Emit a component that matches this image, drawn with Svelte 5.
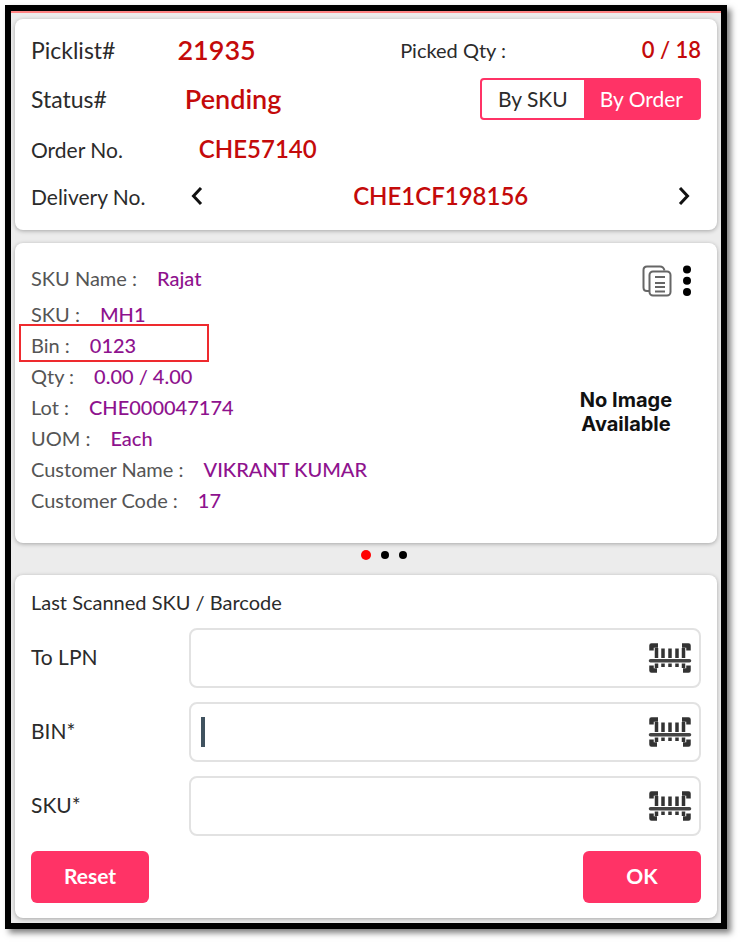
<script lang="ts">
	type Mode = 'sku' | 'order'

	type Detail = {
		label: string
		value: string
		marked?: boolean
	}

	const details: Detail[] = [
		{ label: 'SKU Name', value: 'Rajat' },
		{ label: 'SKU', value: 'MH1' },
		{ label: 'Bin', value: '0123', marked: true },
		{ label: 'Qty', value: '0.00 / 4.00' },
		{ label: 'Lot', value: 'CHE000047174' },
		{ label: 'UOM', value: 'Each' },
		{ label: 'Customer Name', value: 'VIKRANT KUMAR' },
		{ label: 'Customer Code', value: '17' },
	]

	const fields = $state([
		{ id: 'lpn', label: 'To LPN', value: '' },
		{ id: 'bin', label: 'BIN*', value: '' },
		{ id: 'sku', label: 'SKU*', value: '' },
	])

	let mode: Mode = $state('order')
	let active = $state('bin')
	let page = $state(0)

	const reset = () => {
		for (const field of fields) field.value = ''
		active = 'bin'
	}
</script>

<main class="screen">
	<section class="card summary">
		<div class="row">
			<span class="label big">Picklist#</span>
			<strong class="value large near">21935</strong>
			<span class="label picked">Picked Qty :</span>
			<strong class="value count">0 / 18</strong>
		</div>
		<div class="row status">
			<span class="label big">Status#</span>
			<strong class="value large">Pending</strong>
			<div class="toggle">
				<button class:on={mode === 'sku'} onclick={() => (mode = 'sku')}>By SKU</button>
				<button class:on={mode === 'order'} onclick={() => (mode = 'order')}>By Order</button>
			</div>
		</div>
		<div class="row">
			<span class="label">Order No.</span>
			<strong class="value">CHE57140</strong>
		</div>
		<div class="row delivery">
			<span class="label">Delivery No.</span>
			<div class="pager">
				<button class="icon" aria-label="Previous delivery">
					<svg width="12" height="18" viewBox="0 0 12 18"><path d="M10 1 L2.5 9 L10 17" /></svg>
				</button>
				<strong class="value">CHE1CF198156</strong>
				<button class="icon" aria-label="Next delivery">
					<svg width="12" height="18" viewBox="0 0 12 18"><path d="M2 1 L9.5 9 L2 17" /></svg>
				</button>
			</div>
		</div>
	</section>

	<section class="card item">
		<dl>
			{#each details as detail}
				<div class="detail" class:marked={detail.marked}>
					<dt>{detail.label} :</dt>
					<dd>{detail.value}</dd>
				</div>
			{/each}
		</dl>
		<div class="side">
			<div class="actions">
				<button class="icon" aria-label="Copy">
					<svg class="copy" width="30" height="32" viewBox="0 0 30 32">
						<path d="M7 26 H5 Q1.5 26 1.5 22.5 V5 Q1.5 1.5 5 1.5 H18 Q21.5 1.5 22.5 5.5" />
						<rect x="7.5" y="6.5" width="21" height="24" rx="3.5" />
						<path d="M13 12 H23 M13 18 H23 M13 22 H23 M13 26.5 H23" />
					</svg>
				</button>
				<button class="icon" aria-label="More">
					<svg class="more" width="8" height="32" viewBox="0 0 8 32">
						<circle cx="4" cy="4.5" r="4" />
						<circle cx="4" cy="15.8" r="4" />
						<circle cx="4" cy="27" r="4" />
					</svg>
				</button>
			</div>
			<p class="no-image">No Image<br />Available</p>
		</div>
	</section>

	<nav class="dots" aria-label="Items">
		{#each [0, 1, 2] as i}
			<button class:current={page === i} aria-label="Item {i + 1}" onclick={() => (page = i)}></button>
		{/each}
	</nav>

	<section class="card scan">
		<h2>Last Scanned SKU / Barcode</h2>
		{#each fields as field}
			<div class="field">
				<label for={field.id}>{field.label}</label>
				<div class="box">
					<input id={field.id} bind:value={field.value} onfocus={() => (active = field.id)} />
					{#if active === field.id && !field.value}
						<span class="caret"></span>
					{/if}
					<button class="icon" aria-label="Scan {field.label}">
						<svg class="barcode" width="44" height="32" viewBox="0 0 44 32">
							<path class="corner" d="M3.5 8.5 V3.5 H10 M34 3.5 H40.5 V8.5 M3.5 23.5 V28.5 H9 M35 28.5 H40.5 V23.5" />
							<path class="bars" d="M8.5 6 V16 M15 6.5 V16 M22 6.5 V16 M29 6.5 V16 M35.5 6 V16" />
							<path class="bars" d="M8.5 21.5 V26 M15 21.5 V25 M22 21.5 V25 M29 21.5 V25 M35.5 21.5 V26" />
							<path class="beam" d="M2.5 18.8 H41.5" />
						</svg>
					</button>
				</div>
			</div>
		{/each}
		<div class="buttons">
			<button onclick={reset}>Reset</button>
			<button>OK</button>
		</div>
	</section>
</main>

<style>
	:global(body) {
		background: #fff;
	}

	.screen {
		margin: 5px 13px 13px 5px;
		padding: 8px 4px 5px;
		border: 6px solid #000;
		background: linear-gradient(#ff8484 2px, #ececec 2px);
		box-shadow: 4px 4px 6px rgba(0, 0, 0, 0.5);
		font-family: Lato, sans-serif;
		font-size: 20px;
		color: #2b2b2b;
	}

	button {
		margin: 0;
		padding: 0;
		border: none;
		background: none;
		font: inherit;
		color: inherit;
		cursor: pointer;
	}

	.card {
		padding: 0 16px;
		border-radius: 8px;
		background: #fff;
		box-shadow: 0 1px 4px rgba(0, 0, 0, 0.3);
	}

	.summary {
		padding-top: 7px;
		padding-bottom: 12px;
	}

	.row {
		display: flex;
		align-items: center;
		height: 50px;
	}

	.row:first-child {
		height: 48px;
	}

	.row.delivery {
		height: 44px;
	}

	.label {
		font-size: 21px;
	}

	.label.big {
		font-size: 23px;
	}

	.label.picked {
		margin-left: auto;
		font-size: 20px;
	}

	.value {
		margin-left: 76px;
		padding-bottom: 2px;
		font-size: 24px;
		font-weight: 600;
		color: #c40a0a;
	}

	.value.large {
		margin-left: 78px;
		font-size: 27px;
	}

	.value.near {
		margin-left: 62px;
	}

	.value.count {
		width: 195px;
		margin-left: 0;
		font-size: 22px;
		text-align: right;
	}

	.toggle {
		display: flex;
		height: 42px;
		margin-left: auto;
		box-sizing: border-box;
		border: 2px solid #ff3366;
		border-radius: 4px;
		font-size: 21px;
	}

	.toggle button {
		padding: 0 16px 2px;
	}

	.toggle .on {
		background: #ff3366;
		color: #fff;
	}

	.pager {
		display: flex;
		flex: 1;
		align-items: center;
		justify-content: space-between;
		padding: 0 11px 0 46px;
	}

	.pager .value {
		margin: 0;
	}

	.icon {
		display: flex;
	}

	svg {
		fill: none;
		stroke: #111;
		stroke-width: 3;
	}

	.item {
		display: flex;
		justify-content: space-between;
		margin-top: 13px;
		padding-top: 20px;
		padding-bottom: 27px;
	}

	dl {
		margin: 0;
	}

	.detail {
		display: flex;
		position: relative;
		gap: 20px;
		line-height: 31px;
	}

	.detail:first-child {
		margin-bottom: 5px;
	}

	/* highlight frame, drawn over the neighbouring rows */
	.marked::after {
		content: '';
		position: absolute;
		top: -6px;
		left: -12px;
		width: 190px;
		height: 38px;
		box-sizing: border-box;
		border: 2px solid #ee2a2e;
	}

	dt {
		color: #555;
	}

	dd {
		margin: 0;
		font-weight: 500;
		color: #8e128e;
	}

	.side {
		width: 150px;
	}

	.actions {
		display: flex;
		justify-content: flex-end;
		gap: 11px;
		padding: 2px 10px 0 0;
	}

	.copy {
		stroke: #666;
		stroke-width: 2;
	}

	.more {
		fill: #000;
		stroke: none;
	}

	.no-image {
		margin: 91px 0 0;
		font-family: Inter, sans-serif;
		font-size: 20px;
		font-weight: 700;
		line-height: 24px;
		color: #111;
		text-align: center;
	}

	.dots {
		display: flex;
		align-items: center;
		justify-content: center;
		gap: 10px;
		height: 24px;
		padding: 0 0 8px 35px;
	}

	.dots button {
		width: 8px;
		height: 8px;
		border-radius: 50%;
		background: #000;
	}

	.dots .current {
		width: 10px;
		height: 10px;
		background: #f00;
	}

	.scan {
		padding-top: 13px;
		padding-bottom: 15px;
	}

	h2 {
		margin: 0 0 12px;
		font-size: 20px;
		font-weight: 400;
		line-height: 28px;
	}

	.field {
		display: flex;
		align-items: center;
		margin-bottom: 14px;
	}

	.field label {
		width: 158px;
		padding-bottom: 4px;
		font-size: 21px;
	}

	.box {
		display: flex;
		position: relative;
		flex: 1;
		align-items: center;
		height: 60px;
		padding: 0 7px 0 10px;
		box-sizing: border-box;
		border: 2px solid #e2e2e2;
		border-radius: 8px;
	}

	input {
		flex: 1;
		min-width: 0;
		height: 40px;
		padding: 0;
		border: none;
		outline: none;
		background: none;
		font: inherit;
		color: inherit;
		caret-color: transparent;
	}

	.caret {
		position: absolute;
		left: 10px;
		width: 4px;
		height: 30px;
		background: #40525f;
	}

	.barcode {
		stroke: #333;
		stroke-linejoin: round;
	}

	.corner {
		stroke-width: 4.5;
	}

	.bars {
		stroke-width: 3.5;
	}

	.beam {
		stroke: #444;
		stroke-width: 3.5;
		stroke-linecap: round;
	}

	.buttons {
		display: flex;
		justify-content: space-between;
		padding-top: 1px;
	}

	.buttons button {
		width: 118px;
		height: 52px;
		padding-bottom: 3px;
		border-radius: 6px;
		background: #ff3366;
		font-size: 21px;
		font-weight: 700;
		color: #fff;
	}
</style>
